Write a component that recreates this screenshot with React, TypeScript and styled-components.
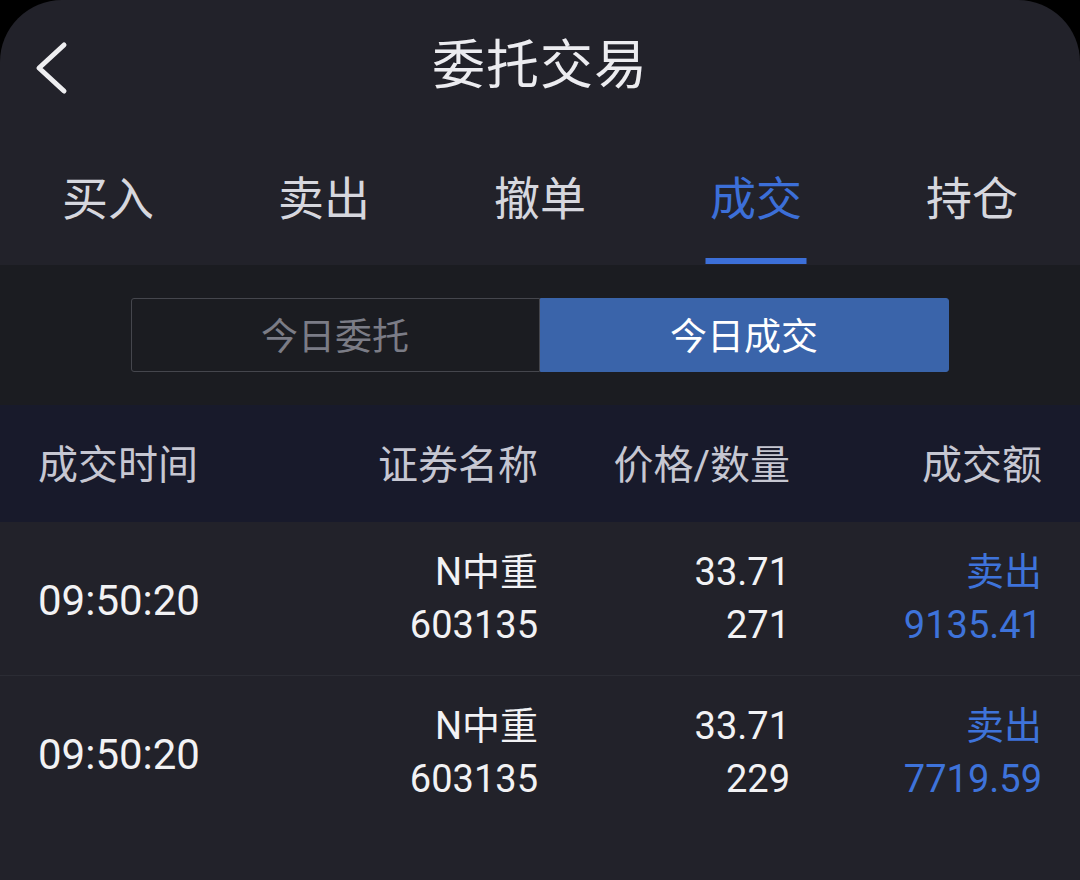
import { useState } from 'react';
import styled, { createGlobalStyle } from 'styled-components';

const GlobalStyle = createGlobalStyle`
  html, body {
    margin: 0;
    padding: 0;
    background: #000;
  }
  body {
    font-family: Roboto, "Noto Sans CJK SC", sans-serif;
  }
`;

const Screen = styled.div`
  width: 1080px;
  height: 880px;
  background: #22222a;
  border-radius: 62px 62px 0 0;
  overflow: hidden;
  display: flex;
  flex-direction: column;
`;

const Header = styled.div`
  height: 136px;
  display: grid;
  grid-template-columns: 120px 1fr 120px;
  align-items: center;
`;

const BackButton = styled.button`
  background: none;
  border: none;
  padding: 0 0 0 34px;
  height: 60px;
  display: flex;
  align-items: center;
  cursor: pointer;
`;

const Title = styled.h1`
  margin: 0 0 2px;
  text-align: center;
  font-size: 53px;
  line-height: 1.2;
  font-weight: 400;
  color: #ececf0;
  letter-spacing: 1px;
`;

const TabBar = styled.div`
  height: 129px;
  display: grid;
  grid-template-columns: repeat(5, 1fr);
`;

const Tab = styled.div<{ $active?: boolean }>`
  position: relative;
  display: flex;
  align-items: center;
  justify-content: center;
  padding-bottom: 12px;
  font-size: 46px;
  color: ${(p) => (p.$active ? '#3c6fd8' : '#d6d7de')};
  cursor: pointer;

  &::after {
    content: '';
    display: ${(p) => (p.$active ? 'block' : 'none')};
    position: absolute;
    bottom: 1px;
    left: 50%;
    transform: translateX(-50%);
    width: 101px;
    height: 6px;
    background: #3c6fd8;
  }
`;

const SegmentArea = styled.div`
  height: 140px;
  background: #1b1c21;
  display: flex;
  align-items: center;
  justify-content: center;
  padding-right: 1px;
`;

const Segment = styled.div`
  width: 818px;
  height: 74px;
  display: grid;
  grid-template-columns: 1fr 1fr;
`;

const SegmentButton = styled.div<{ $active?: boolean }>`
  display: flex;
  align-items: center;
  justify-content: center;
  padding-bottom: 2px;
  font-size: 37px;
  border: 1.5px solid ${(p) => (p.$active ? '#3a64aa' : '#45464d')};
  background: ${(p) => (p.$active ? '#3a64aa' : 'transparent')};
  color: ${(p) => (p.$active ? '#ffffff' : '#7b7c86')};
  border-radius: ${(p) => (p.$active ? '0 3px 3px 0' : '3px 0 0 3px')};
  cursor: pointer;
`;

const Grid = styled.div`
  display: grid;
  grid-template-columns: 250px 250px 252px 252px;
  padding: 0 38px;
  align-items: center;
`;

const TableHead = styled(Grid)`
  height: 117px;
  background: #181a2b;
`;

const HeadCell = styled.div<{ $right?: boolean }>`
  font-size: 40px;
  color: #c6c7d2;
  padding-bottom: 4px;
  text-align: ${(p) => (p.$right ? 'right' : 'left')};
`;

const Row = styled(Grid)<{ $divider?: boolean }>`
  height: 153px;
  border-bottom: 1px solid ${(p) => (p.$divider ? '#2b2c34' : 'transparent')};
`;

const Cell = styled.div<{ $right?: boolean; $blue?: boolean; $large?: boolean }>`
  font-size: ${(p) => (p.$large ? '42px' : '38px')};
  line-height: 53px;
  color: ${(p) => (p.$blue ? '#3e73da' : '#f2f2f4')};
  text-align: ${(p) => (p.$right ? 'right' : 'left')};
  display: flex;
  flex-direction: column;
  padding-top: ${(p) => (p.$large ? '4px' : '0')};
`;

const tabs = ['买入', '卖出', '撤单', '成交', '持仓'];

const trades = [
  { time: '09:50:20', name: 'N中重', code: '603135', price: '33.71', qty: '271', side: '卖出', amount: '9135.41' },
  { time: '09:50:20', name: 'N中重', code: '603135', price: '33.71', qty: '229', side: '卖出', amount: '7719.59' },
];

const BackIcon = () => (
  <svg width="34" height="54" viewBox="0 0 34 54">
    <path d="M30 4 L5 27 L30 50" fill="none" stroke="#eeeef0" strokeWidth="5" strokeLinecap="round" strokeLinejoin="round" />
  </svg>
);

const App = () => {
  const [activeTab, setActiveTab] = useState(3);
  const [today, setToday] = useState(1);

  return (
    <>
      <GlobalStyle />
      <Screen>
        <Header>
          <BackButton>
            <BackIcon />
          </BackButton>
          <Title>委托交易</Title>
          <div />
        </Header>
        <TabBar>
          {tabs.map((t, i) => (
            <Tab key={t} $active={i === activeTab} onClick={() => setActiveTab(i)}>
              {t}
            </Tab>
          ))}
        </TabBar>
        <SegmentArea>
          <Segment>
            <SegmentButton $active={today === 0} onClick={() => setToday(0)}>
              今日委托
            </SegmentButton>
            <SegmentButton $active={today === 1} onClick={() => setToday(1)}>
              今日成交
            </SegmentButton>
          </Segment>
        </SegmentArea>
        <TableHead>
          <HeadCell>成交时间</HeadCell>
          <HeadCell $right>证券名称</HeadCell>
          <HeadCell $right>价格/数量</HeadCell>
          <HeadCell $right>成交额</HeadCell>
        </TableHead>
        {trades.map((r, i) => (
          <Row key={i} $divider={i < trades.length - 1}>
            <Cell $large>{r.time}</Cell>
            <Cell $right>
              <span>{r.name}</span>
              <span>{r.code}</span>
            </Cell>
            <Cell $right>
              <span>{r.price}</span>
              <span>{r.qty}</span>
            </Cell>
            <Cell $right $blue>
              <span>{r.side}</span>
              <span>{r.amount}</span>
            </Cell>
          </Row>
        ))}
      </Screen>
    </>
  );
};

export default App;
